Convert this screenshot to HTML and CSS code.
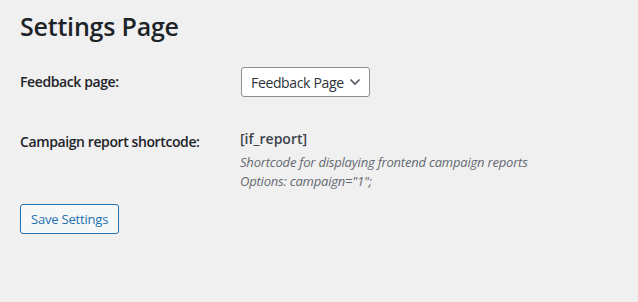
FILE: index.html
```html
<!DOCTYPE html>
<html>
<head>
    <title>Settings Page</title>
    <link rel="stylesheet" href="styles.css">
</head>
<body>
    <div class="wrap">
        <h1 class="page-title">Settings Page</h1>

        <form class="settings-form">
            <div class="form-row">
                <div class="form-label">Feedback page:</div>
                <div class="form-field">
                    <div class="select-box">
                        <span>Feedback Page</span>
                        <svg class="chevron" width="12" height="8" viewBox="0 0 12 8">
                            <path d="M1.5 1.5 L6 6 L10.5 1.5" fill="none" stroke="#50575e" stroke-width="1.6"/>
                        </svg>
                    </div>
                </div>
            </div>

            <div class="form-row">
                <div class="form-label">Campaign report shortcode:</div>
                <div class="form-field">
                    <div class="shortcode">[if_report]</div>
                    <p class="description">Shortcode for displaying frontend campaign reports<br>Options: campaign="1";</p>
                </div>
            </div>

            <button type="button" class="save-button">Save Settings</button>
        </form>
    </div>
</body>
</html>
```

FILE: styles.css
```css
body {
    margin: 0;
    background: #f0f0f1;
    color: #1d2327;
    font-family: "Open Sans", "Noto Sans", sans-serif;
    font-size: 13px;
}

.wrap {
    padding: 0 20px;
}

.page-title {
    font-size: 25px;
    font-weight: 600;
    margin: 0;
    padding: 9px 0 0;
    line-height: 34px;
    letter-spacing: -0.2px;
}

.settings-form {
    margin-top: 9px;
}

.form-row {
    display: flex;
}

.form-label {
    width: 200px;
    padding: 20px 10px 20px 0;
    font-size: 14px;
    font-weight: 600;
    line-height: 20px;
    letter-spacing: -0.4px;
}

.form-field {
    padding: 15px 10px 13px;
}

.select-box {
    display: inline-flex;
    align-items: center;
    gap: 5px;
    height: 28px;
    padding: 0 8px 0 9px;
    margin-left: 1px;
    background: #fff;
    border: 1px solid #8c8f94;
    border-radius: 3px;
    font-size: 14px;
    color: #2c3338;
    letter-spacing: -0.35px;
}

.shortcode {
    font-size: 14px;
    font-weight: 600;
    line-height: 20px;
    color: #3c434a;
    margin-top: 2px;
}

.description {
    margin: 4px 0 0;
    font-size: 13px;
    font-style: italic;
    line-height: 19px;
    color: #646970;
    letter-spacing: -0.2px;
}

.save-button {
    display: block;
    height: 30px;
    padding: 0 10px;
    background: #f6f7f7;
    border: 1px solid #2271b1;
    border-radius: 3px;
    color: #2271b1;
    font-family: inherit;
    font-size: 13px;
    letter-spacing: -0.2px;
}
```
